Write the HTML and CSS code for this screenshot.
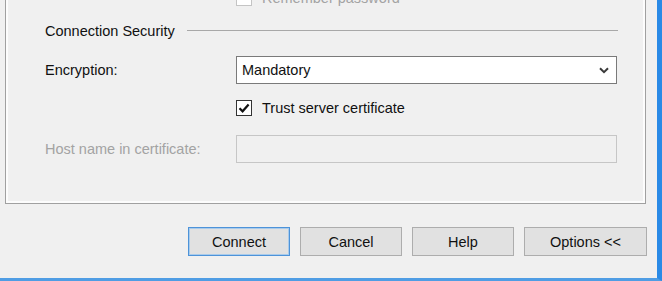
FILE: index.html
```html
<!DOCTYPE html>
<html lang="en">
<head>
  <meta charset="UTF-8">
  <title>Connect to Server</title>
  <link rel="stylesheet" href="styles.css">
</head>
<body>

<div class="window">
  <div class="group">
    <div class="row check-row disabled">
      <span class="box"></span>
      <span>Remember password</span>
    </div>

    <div class="section">
      <span>Connection Security</span>
      <span class="rule"></span>
    </div>

    <div class="form">
      <label>Encryption:</label>
      <div class="select">
        <span>Mandatory</span>
        <svg width="10" height="7" viewBox="0 0 10 7"><path d="M1 1.2 L5 5.2 L9 1.2" fill="none" stroke="#3a3a3a" stroke-width="2"/></svg>
      </div>

      <span></span>
      <div class="check-row trust">
        <span class="box">
          <svg width="12" height="12" viewBox="0 0 12 12"><path d="M1.5 6.2 L4.6 9.3 L10.6 2.6" fill="none" stroke="#111" stroke-width="2.2"/></svg>
        </span>
        <span>Trust server certificate</span>
      </div>

      <label class="disabled host-label">Host name in certificate:</label>
      <div class="text-input disabled-input"></div>
    </div>
  </div>

  <div class="buttons">
    <button class="default">Connect</button>
    <button>Cancel</button>
    <button>Help</button>
    <button class="wide">Options &lt;&lt;</button>
  </div>
</div>

</body>
</html>
```

FILE: styles.css
```css
* { margin: 0; padding: 0; box-sizing: border-box; }

body {
  font-family: 'Liberation Sans', Arial, sans-serif;
  font-size: 14.5px;
  color: #111;
  background: #f0f0f0;
  overflow: hidden;
}

/* Window frame */
.window {
  height: 281px;
  padding-left: 5px;
  border-right: 5px solid #2a8ae6;
  border-bottom: 3px solid #4f9de4;
  display: flex;
  flex-direction: column;
}

/* Group box */
.group {
  width: 641px;
  margin-top: -11px;
  padding: 0 0 40px 39px;
  border: 1px solid #a0a0a0;
  box-shadow: inset 0 0 0 2px #fcfcfc;
}

.disabled { color: #a3a3a3; }

.check-row {
  display: flex;
  align-items: center;
  gap: 10px;
  height: 16px;
}

.group > .check-row { margin-left: 191px; }

.box {
  width: 16px;
  height: 16px;
  border: 1px solid #333;
  background: #fff;
  display: flex;
  align-items: center;
  justify-content: center;
}

.disabled .box { border-color: #c4c4c4; }

/* Section header */
.section {
  display: flex;
  align-items: center;
  gap: 12px;
  height: 17px;
  margin-top: 16px;
  margin-right: 27px;
}

.section .rule {
  flex: 1;
  height: 1px;
  background: #a8a8a8;
}

/* Form */
.form {
  display: grid;
  grid-template-columns: 191px 381px;
  align-items: center;
  margin-top: 17px;
}

.select {
  height: 28px;
  border: 1px solid #7a7a7a;
  background: #fff;
  display: flex;
  align-items: center;
  justify-content: space-between;
  padding: 0 7px 0 5px;
}

.trust { margin-top: 16px; }

.host-label, .text-input { margin-top: 19px; }

.text-input {
  height: 28px;
  border: 1px solid #c6c6c6;
}

.disabled-input { background: #f0f0f0; }

/* Buttons */
.buttons {
  display: flex;
  justify-content: flex-end;
  gap: 10px;
  margin-top: 23px;
  padding-right: 10px;
}

.buttons button {
  width: 102px;
  height: 29px;
  font: inherit;
  color: #111;
  background: #e1e1e1;
  border: 1px solid #adadad;
}

.buttons button.default {
  border-color: #4d93d9;
  box-shadow: inset 0 0 0 1px #a9cbeb;
}

.buttons button.wide { width: 123px; }
```
